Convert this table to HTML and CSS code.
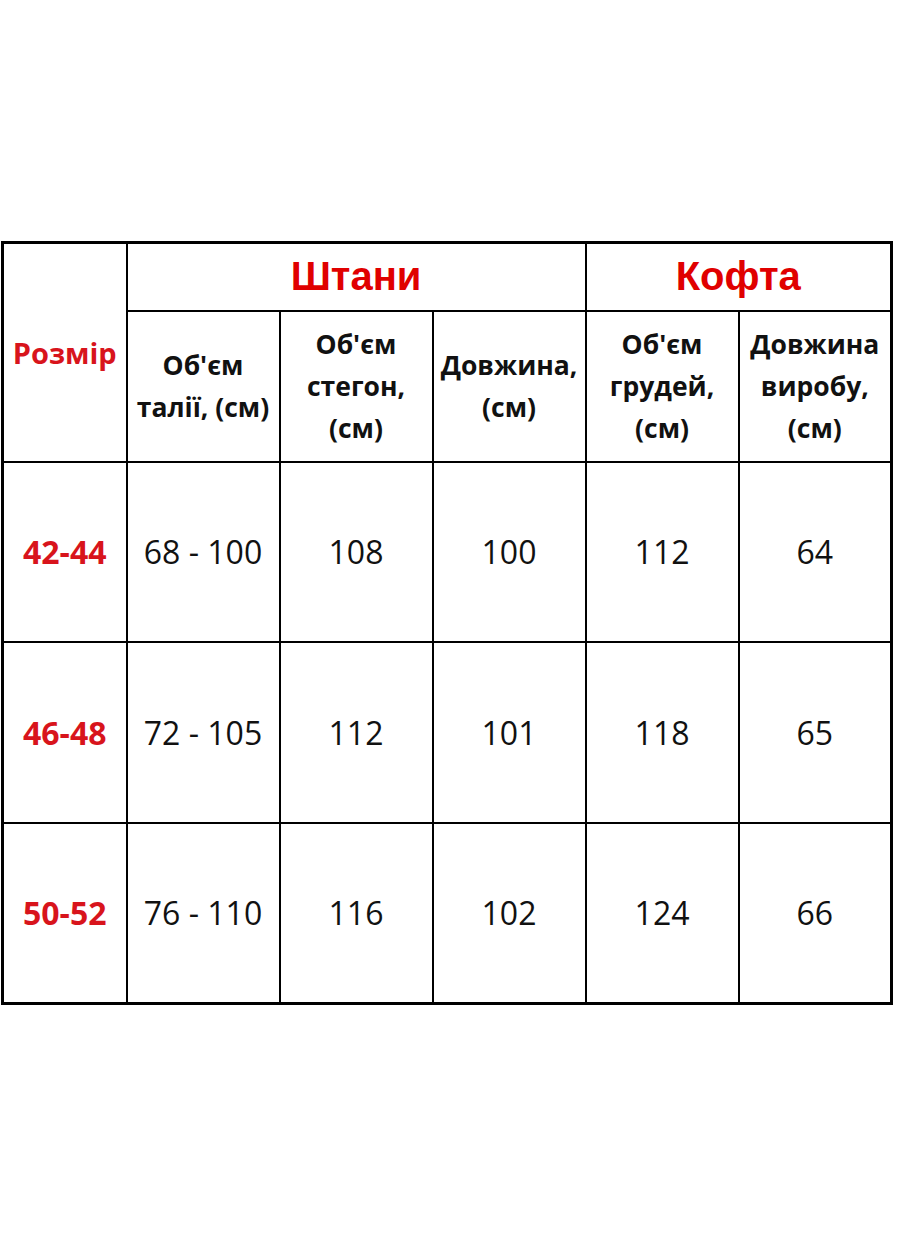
FILE: index.html
```html
<!DOCTYPE html>
<html lang="uk">
<head>
<meta charset="utf-8">
<title>Розмірна сітка</title>
<link rel="stylesheet" href="styles.css">
</head>
<body>
<div class="page">
<table class="sizes">
  <colgroup>
    <col class="c-size">
    <col class="c-val"><col class="c-val"><col class="c-val"><col class="c-val"><col class="c-val">
  </colgroup>
  <tr class="r-group">
    <th rowspan="2" class="label">Розмір</th>
    <th colspan="3" class="group">Штани</th>
    <th colspan="2" class="group">Кофта</th>
  </tr>
  <tr class="r-head">
    <th class="head">Об'єм<br>талії, (см)</th>
    <th class="head">Об'єм<br>стегон,<br>(см)</th>
    <th class="head">Довжина,<br>(см)</th>
    <th class="head">Об'єм<br>грудей,<br>(см)</th>
    <th class="head">Довжина<br>виробу,<br>(см)</th>
  </tr>
  <tr class="r-data">
    <th class="size">42-44</th>
    <td>68 - 100</td><td>108</td><td>100</td><td>112</td><td>64</td>
  </tr>
  <tr class="r-data">
    <th class="size">46-48</th>
    <td>72 - 105</td><td>112</td><td>101</td><td>118</td><td>65</td>
  </tr>
  <tr class="r-data">
    <th class="size">50-52</th>
    <td>76 - 110</td><td>116</td><td>102</td><td>124</td><td>66</td>
  </tr>
</table>
</div>
</body>
</html>
```

FILE: styles.css
```css
html, body {
  margin: 0;
  padding: 0;
  background: #ffffff;
}
.page {
  padding: 241px 0 0 1px;
}
.sizes {
  border-collapse: collapse;
  table-layout: fixed;
  width: 889px;
  border: 3px solid #000;
  font-family: "Open Sans", "Noto Sans", sans-serif;
  color: #111;
}
.c-size { width: 124px; }
.c-val { width: 153px; }
.sizes th, .sizes td {
  border: 2.5px solid #000;
  text-align: center;
  vertical-align: middle;
  padding: 0;
}
.r-group { height: 68px; }
.r-head { height: 151px; }
.r-data { height: 180.7px; }
.group {
  font-family: "Liberation Sans", Arial, sans-serif;
  font-weight: 700;
  font-size: 40px;
  color: #e00000;
}
.label {
  font-weight: 700;
  font-size: 29px;
  color: #d8141c;
}
.head {
  font-weight: 700;
  font-size: 26.5px;
  line-height: 42px;
  color: #111;
}
.size {
  font-weight: 700;
  font-size: 32px;
  color: #d8141c;
}
.sizes td {
  font-weight: 400;
  font-size: 32px;
  color: #111;
}
```
